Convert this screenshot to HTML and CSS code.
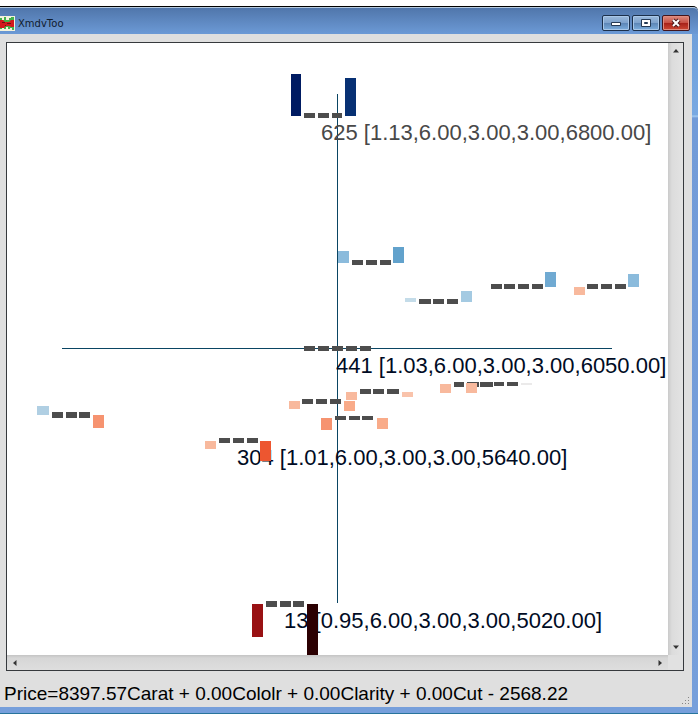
FILE: index.html
```
<!DOCTYPE html>
<html lang="en">
<head>
<meta charset="utf-8">
<title>XmdvTool</title>
<link rel="stylesheet" href="styles.css">
</head>
<body>
<main class="window">
  <header class="titlebar">
    <svg class="app-icon" viewBox="0 0 15 15" aria-hidden="true">
      <path fill="#f4f2dc" d="M0 0h15v15H0z"/>
      <path fill="#43b34a" d="M0 2h2v2h2V1h2v3h3V2h2V1h3v13h-2v-2h-2v1H8v-2H6v2H4v-1H2v1H0z"/>
      <path fill="#d3181c" d="M0 4h3l2 2h4l2-2h3v7h-3l-2-1H6l-2 2H0z"/>
      <path fill="#6b1210" d="M2 6h3v1H2zM7 7h4v1H7zM5 9h1v1H5z"/>
    </svg>
    <span class="title">XmdvToo</span>
    <div class="controls">
      <button class="control" aria-label="Minimize">
        <svg class="glyph" viewBox="0 0 12 10"><path fill="#fff" stroke="#253a55" d="M1.5 4.500h9v3h-9z"/></svg>
      </button>
      <button class="control" aria-label="Maximize">
        <svg class="glyph" viewBox="0 0 12 10"><path fill="#fff" stroke="#253a55" d="M1.500 1.500h9v7h-9z"/><path fill="#6c94c0" stroke="#253a55" d="M4.500 4.500h3v1h-3z"/></svg>
      </button>
      <button class="control close" aria-label="Close">
        <svg class="glyph" viewBox="0 0 12 10"><path stroke="#4c1a1c" stroke-width="4" d="M3 2l6 6M9 2L3 8"/><path stroke="#fff" stroke-width="2" d="M3 2l6 6M9 2L3 8"/></svg>
      </button>
    </div>
  </header>
  <div class="client">
    <section class="view">
      <div class="canvas">
        <svg class="plot" viewBox="7 43 661 612" role="img" aria-label="Diamond neighbours plot">
          <g class="axes"><path d="M337 94h1v509h-1z"/><path d="M62 348h550v1H62z"/></g>
          <g class="label">
            <text class="muted" x="321" y="140">625 [1.13,6.00,3.00,3.00,6800.00]</text>
            <text x="336" y="373">441 [1.03,6.00,3.00,3.00,6050.00]</text>
            <text x="237" y="465">304 [1.01,6.00,3.00,3.00,5640.00]</text>
            <text x="284" y="628">13 [0.95,6.00,3.00,3.00,5020.00]</text>
          </g>
          <path class="dash" d="M304 113h11v5h-11zM318 113h11v5h-11zM332 113h10v5h-10z
            M352 260h11v5h-11zM366 260h11v5h-11zM380 260h11v5h-11z
            M419 299h12v5h-12zM433 299h11v5h-11zM447 299h11v5h-11z
            M491 284h11v5h-11zM504 284h11v5h-11zM518 284h11v5h-11zM532 284h11v5h-11z
            M587 284h11v5h-11zM601 284h11v5h-11zM615 284h11v5h-11z
            M304 346h11v5h-11zM318 346h11v5h-11zM332 346h11v5h-11zM346 346h11v5h-11zM360 346h11v5h-11z
            M302 399h11v5h-11zM316 399h11v5h-11zM330 399h11v5h-11z
            M360 389h11v5h-11zM373 389h11v5h-11zM387 389h12v5h-12z
            M335 416h11v4h-11zM349 416h11v4h-11zM362 416h11v4h-11z
            M454 382h10v5h-10zM467 382h12v5h-12zM480 382h13v5h-13zM494 382h10v4h-10zM507 382h11v4h-11z
            M52 412h11v6h-11zM66 412h11v6h-11zM79 412h11v6h-11z
            M219 438h11v5h-11zM233 438h11v5h-11zM247 438h11v5h-11z
            M266 601h11v6h-11zM280 601h11v6h-11zM293 601h11v6h-11z"/>
          <path fill="#001b62" d="M291 74h10v42h-10z"/>
          <path fill="#073073" d="M345 78h11v38h-11z"/>
          <path fill="#8bbbdc" d="M338 251h11v12h-11zM628 274h11v13h-11z"/>
          <path fill="#62a2cc" d="M393 247h11v16h-11z"/>
          <path fill="#70aad2" d="M545 272h11v15h-11z"/>
          <path fill="#c4dce9" d="M405 298h11v4h-11z"/>
          <path fill="#a4cae2" d="M461 291h11v11h-11z"/>
          <path fill="#b0cfe3" d="M37 406h12v9H37z"/>
          <path fill="#f8b99d" d="M574 287h11v8h-11zM289 401h11v8h-11zM346 392h11v8h-11zM440 384h11v9h-11zM466 383h11v10h-11zM205 441h11v8h-11z"/>
          <path fill="#f9c3ab" d="M402 392h11v5h-11z"/>
          <path fill="#f9ab89" d="M344 401h11v10h-11zM377 418h11v11h-11z"/>
          <path fill="#f69370" d="M321 418h11v12h-11zM93 415h11v13H93z"/>
          <path fill="#ebeaea" d="M521 383h11v2h-11z"/>
          <path fill="#ed5630" d="M260 441h11v20h-11z"/>
          <path fill="#991113" d="M252 604h11v33h-11z"/>
          <path fill="#2b0002" d="M307 604h11v51h-11z"/>
        </svg>
      </div>
      <div class="scroll vertical">
        <svg class="arrow" viewBox="0 0 6 6"><path d="M0 4.500L3 1l3 3.500z"/></svg>
        <svg class="arrow" viewBox="0 0 6 6"><path d="M0 1.500h6L3 5z"/></svg>
      </div>
      <div class="scroll horizontal">
        <svg class="arrow" viewBox="0 0 6 6"><path d="M4.500 0v6L1 3z"/></svg>
        <svg class="arrow" viewBox="0 0 6 6"><path d="M1.500 0v6L5 3z"/></svg>
      </div>
      <div class="corner"></div>
    </section>
    <footer class="status">
      <span>Price=8397.57Carat + 0.00Cololr + 0.00Clarity + 0.00Cut - 2568.22</span>
      <svg class="grip" viewBox="0 0 8 8" aria-hidden="true"><path fill="#858585" d="M6 0h1v1H6zM3 3h1v1H3zM6 3h1v1H6zM0 6h1v1H0zM3 6h1v1H3zM6 6h1v1H6z"/></svg>
    </footer>
  </div>
</main>
</body>
</html>
```

FILE: styles.css
```
* {
  box-sizing: border-box;
}

body {
  margin: 0;
  padding: 6px 0 12px;
  height: 100vh;
  background: #fff;
  font-family: "Liberation Sans", Arial, sans-serif;
}

.window {
  display: flex;
  flex-direction: column;
  height: 100%;
  padding-right: 6px;
  padding-bottom: 6px;
  border-top: 1px solid #000;
  border-bottom: 1px solid #27749c;
  border-top-right-radius: 5px;
  background: linear-gradient(#5578aa, #6f9fda 26px, #79a9e2 108px, #a5cdf3 109px, #729bd8 111px, #769fdb);
}

.titlebar {
  display: flex;
  align-items: center;
  height: 27px;
  margin-right: -6px;
  padding: 4px 8px 0 0;
  border-top: 1px solid #b4c9df;
  border-top-right-radius: 5px;
  background: linear-gradient(#5076ab, #6c9ad6);
}

.app-icon {
  width: 15px;
  height: 15px;
}

.title {
  flex: 1;
  padding-left: 3px;
  font-family: "DejaVu Sans", sans-serif;
  font-size: 10px;
  color: #101c2e;
}

.controls {
  display: flex;
  gap: 2px;
  height: 16px;
}

.control {
  display: flex;
  align-items: center;
  justify-content: center;
  width: 28px;
  padding: 0;
  border: 1px solid #1c304b;
  border-radius: 2px;
  background: linear-gradient(#9ab9db, #7fa3cd 48%, #5d86b6 52%, #7caede);
  box-shadow: inset 0 0 0 1px #a9c7e8;
}

.close {
  border-color: #43151c;
  background: linear-gradient(#dc8c80, #c85044 48%, #a82219 52%, #ce4935);
  box-shadow: inset 0 0 0 1px #df8c80;
}

.glyph {
  width: 12px;
  height: 10px;
}

.client {
  display: flex;
  flex: 1;
  flex-direction: column;
  min-height: 0;
  padding: 8px 8px 0 6px;
  background: #dfdfdf;
}

.view {
  display: grid;
  flex: 1;
  grid-template-columns: 1fr 15px;
  grid-template-rows: 1fr 15px;
  min-height: 0;
  border: 1px solid #36393d;
  background: #fff;
}

.canvas {
  min-width: 0;
  min-height: 0;
  overflow: hidden;
}

.plot {
  display: block;
  width: 100%;
  height: 100%;
  shape-rendering: crispEdges;
}

.axes {
  fill: #0a4563;
}

.dash {
  fill: #4d4d4d;
}

.label {
  fill: #000b24;
  font-size: 22px;
}

.muted {
  fill: #484848;
}

.scroll {
  display: flex;
  align-items: center;
  justify-content: space-between;
}

.vertical {
  flex-direction: column;
  padding: 5px 0;
  background: linear-gradient(90deg, #cacaca, #dcdcdc 4px, #e3e3e3);
}

.horizontal {
  padding: 0 5px;
  background: linear-gradient(#c4c4c4, #d6d6d6 3px, #dedede);
}

.corner {
  background: #e1e1e1;
}

.arrow {
  width: 6px;
  height: 6px;
  fill: #333;
}

.status {
  display: flex;
  align-items: center;
  justify-content: space-between;
  height: 36px;
  padding-top: 9px;
  margin: 0 -6px 0 -2px;
  font-size: 19px;
  color: #000;
  white-space: nowrap;
}

.grip {
  align-self: flex-end;
  width: 8px;
  height: 8px;
  margin-bottom: 2px;
}
```
